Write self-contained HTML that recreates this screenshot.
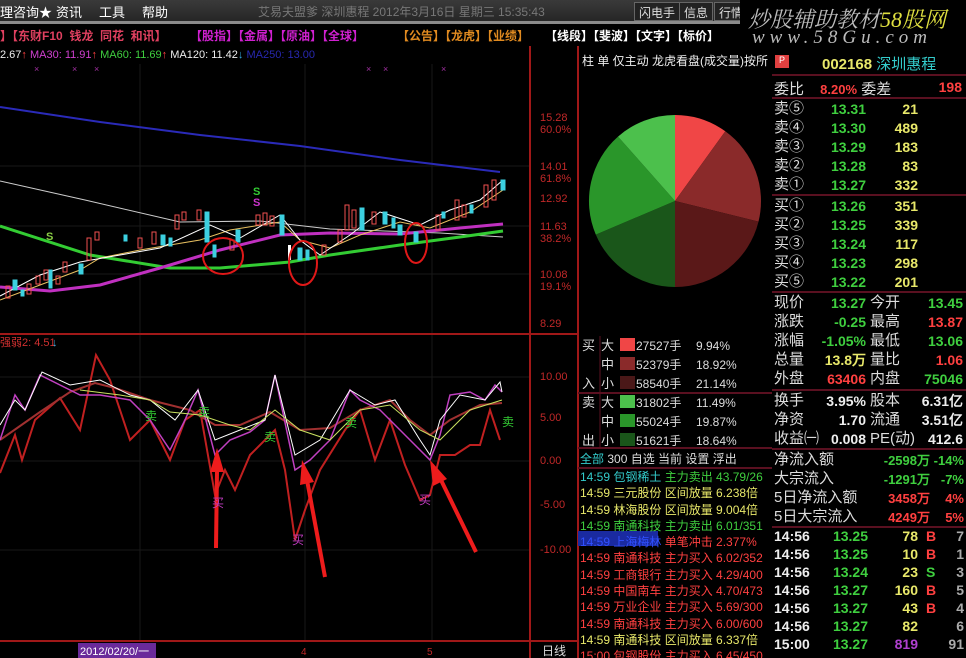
<!DOCTYPE html>
<html><head><meta charset="utf-8">
<style>
*{margin:0;padding:0;box-sizing:border-box}
html,body{width:966px;height:658px;overflow:hidden}
body{background:#000;position:relative;font-family:"Liberation Sans","Noto Sans CJK SC",sans-serif;color:#ddd}
.a{position:absolute;white-space:nowrap}
.menu{left:0;top:0;width:966px;height:21px;background:linear-gradient(#3a3a3a,#262626)}
.m{font-size:13px;color:#fff;top:2px}
.tb{top:27px;font-size:12px;font-weight:bold}
.btn{top:2px;height:19px;border:1px solid #666;font-size:12px;color:#ddd;padding:1px 4px;background:#222}
.r{font-size:15px;color:#ddd;left:774px}
.n{font-family:"Liberation Sans",sans-serif;font-weight:bold;font-size:14px;text-align:right}
.g{color:#3fcf3f}.y{color:#e8e86a}.rd{color:#ff4040}.w{color:#eee}
.sep{position:absolute;height:2px;background:#5a1020}
.nl{font-size:12px;left:580px;width:190px;height:189px;overflow:hidden;font-family:"Liberation Sans","Noto Sans CJK SC",sans-serif}
.ax{font-size:11px;color:#c02828;left:540px}
</style></head><body>
<div class="a menu"></div>
<div class="a m" style="left:0">理咨询★</div>
<div class="a m" style="left:56px">资讯</div>
<div class="a m" style="left:99px">工具</div>
<div class="a m" style="left:142px">帮助</div>
<div class="a" style="left:258px;top:3px;font-size:12px;color:#777">艾易夫盟爹 深圳惠程 2012年3月16日 星期三 15:35:43</div>
<div class="a btn" style="left:634px">闪电手</div>
<div class="a btn" style="left:679px">信息</div>
<div class="a btn" style="left:714px;width:30px">行情</div>
<div class="a" style="left:0;top:21px;width:740px;height:3px;background:#8a8a8a"></div>
<div class="a" style="left:0;top:24px;width:966px;height:22px;background:#000"></div>
<div class="a tb" style="left:0;color:#e04060">】【东财F10 &nbsp;钱龙 &nbsp;同花 &nbsp;和讯】</div>
<div class="a tb" style="left:190px;color:#d020d0">【股指】【金属】【原油】【全球】</div>
<div class="a tb" style="left:397px;color:#e08a20">【公告】【龙虎】【业绩】</div>
<div class="a tb" style="left:545px;color:#fff">【线段】【斐波】【文字】【标价】</div>
<div class="a" style="left:740px;top:0;width:226px;height:46px;background:#000"></div>
<div class="a" style="left:748px;top:3px;font-size:22px;font-style:italic;color:#bbb;font-family:'Liberation Serif','Noto Serif CJK SC',serif">炒股辅助教材<span style="color:#e0e040">58股网</span></div>
<div class="a" style="left:752px;top:27px;font-size:19px;font-style:italic;color:#bbb;letter-spacing:5px;font-family:'Liberation Serif',serif">www.58Gu.com</div>

<div class="a" style="left:0;top:49px;font-size:11px"><span class="w">2.67</span><span class="rd">↑</span> <span style="color:#d040d0">MA30: 11.91</span><span class="rd">↑</span> <span class="g">MA60: 11.69</span><span class="rd">↑</span> <span class="w">MA120: 11.42</span><span style="color:#3ad">↓</span> <span style="color:#2828b0">MA250: 13.00</span></div>

<svg class="a" style="left:0;top:0" width="580" height="658">
<g stroke="#181818" stroke-width="1">
<line x1="140" y1="64" x2="140" y2="640"/><line x1="305" y1="64" x2="305" y2="640"/><line x1="432" y1="64" x2="432" y2="640"/>
<line x1="0" y1="166" x2="530" y2="166"/><line x1="0" y1="226" x2="530" y2="226"/><line x1="0" y1="274" x2="530" y2="274"/>
<line x1="0" y1="377" x2="530" y2="377"/><line x1="0" y1="461" x2="530" y2="461"/><line x1="0" y1="550" x2="530" y2="550"/>
</g>
<line x1="530" y1="46" x2="530" y2="658" stroke="#a01818" stroke-width="2"/>
<line x1="578" y1="46" x2="578" y2="658" stroke="#a01818" stroke-width="2"/>
<line x1="0" y1="334" x2="578" y2="334" stroke="#a01818" stroke-width="2"/>
<line x1="0" y1="641" x2="578" y2="641" stroke="#a01818" stroke-width="2"/>
<polyline fill="none" stroke="#2a2ab8" stroke-width="2" points="0,107 100,122 200,135 300,146 400,160 500,172"/>
<polyline fill="none" stroke="#ccc" stroke-width="1" points="0,181 85,200 180,222 260,221 330,229 440,233 503,237"/>
<polyline fill="none" stroke="#3c3" stroke-width="3" points="0,226 90,255 170,268 220,268 290,262 330,255 400,245 460,237 503,231"/>
<polyline fill="none" stroke="#c030c0" stroke-width="3" points="0,287 50,291 100,285 160,268 220,250 280,235 330,233 400,234 460,228 503,224"/>
<polyline fill="none" stroke="#e8c060" stroke-width="1" points="0,300 40,285 80,270 100,258 140,250 200,240 230,230 280,222 300,240 330,248 360,235 400,222 430,228 470,212 503,190"/>
<polyline fill="none" stroke="#fff" stroke-width="1" points="0,296 40,275 80,262 120,255 160,248 210,225 240,238 280,215 300,240 320,255 350,235 380,212 420,225 450,210 480,200 503,180"/>
<g stroke-width="1">
<g fill="none" stroke="#f05050">
<rect x="6" y="286" width="4" height="12"/><rect x="27" y="284" width="4" height="10"/><rect x="36" y="276" width="4" height="8"/><rect x="44" y="270" width="4" height="10"/><rect x="56" y="276" width="4" height="8"/><rect x="63" y="262" width="4" height="10"/><rect x="87" y="238" width="4" height="22"/><rect x="95" y="232" width="4" height="8"/><rect x="138" y="238" width="4" height="10"/><rect x="152" y="232" width="4" height="12"/><rect x="175" y="215" width="4" height="14"/><rect x="182" y="212" width="4" height="8"/><rect x="197" y="210" width="4" height="10"/><rect x="230" y="240" width="4" height="10"/><rect x="256" y="215" width="4" height="10"/><rect x="263" y="213" width="4" height="12"/><rect x="270" y="216" width="4" height="10"/><rect x="322" y="245" width="4" height="10"/><rect x="338" y="230" width="4" height="12"/><rect x="345" y="205" width="4" height="25"/><rect x="352" y="210" width="4" height="18"/><rect x="372" y="212" width="4" height="12"/><rect x="436" y="215" width="4" height="15"/><rect x="455" y="200" width="4" height="20"/><rect x="462" y="205" width="4" height="12"/><rect x="484" y="185" width="4" height="22"/><rect x="492" y="180" width="4" height="20"/>
</g>
<g fill="#3cd0e0" stroke="#3cd0e0">
<rect x="13" y="280" width="4" height="10"/><rect x="21" y="290" width="3" height="6"/><rect x="49" y="270" width="3" height="18"/><rect x="79" y="264" width="4" height="10"/><rect x="124" y="235" width="3" height="6"/><rect x="161" y="235" width="4" height="10"/><rect x="169" y="238" width="3" height="8"/><rect x="205" y="212" width="4" height="30"/><rect x="213" y="245" width="3" height="12"/><rect x="236" y="230" width="4" height="12"/><rect x="280" y="215" width="4" height="20"/><rect x="298" y="248" width="4" height="12"/><rect x="306" y="250" width="3" height="10"/><rect x="360" y="208" width="4" height="22"/><rect x="383" y="212" width="4" height="12"/><rect x="392" y="218" width="3" height="10"/><rect x="398" y="225" width="4" height="10"/><rect x="414" y="232" width="4" height="10"/><rect x="442" y="212" width="3" height="6"/><rect x="470" y="205" width="3" height="8"/><rect x="501" y="180" width="4" height="10"/>
</g>
<rect x="288" y="245" width="3" height="15" fill="#fff"/>
</g>
<g fill="none" stroke="#e01818" stroke-width="2">
<ellipse cx="223" cy="256" rx="20" ry="18"/><ellipse cx="303" cy="263" rx="14" ry="22"/><ellipse cx="416" cy="243" rx="11" ry="20"/>
</g>
<g font-size="11" font-weight="bold" font-family="Liberation Sans"><text x="46" y="240" fill="#8c4">S</text><text x="253" y="195" fill="#3c3">S</text><text x="253" y="206" fill="#c3c">S</text></g>
<g fill="#a030a0" font-size="9"><text x="34" y="72">×</text><text x="72" y="72">×</text><text x="94" y="72">×</text><text x="366" y="72">×</text><text x="383" y="72">×</text><text x="441" y="72">×</text></g>
<text x="0" y="346" font-size="11" fill="#d03030">强弱2: 4.51</text><text x="52" y="346" font-size="11" fill="#3ad">↓</text>
<polyline fill="none" stroke="#c02020" stroke-width="2" points="0,473 15,435 22,460 35,420 60,398 80,430 96,355 110,380 130,440 150,420 170,460 185,420 200,410 215,495 225,470 235,490 250,455 275,430 285,470 295,540 305,510 320,470 345,430 360,410 375,460 390,420 405,465 420,500 430,495 440,455 455,455 470,445 480,445 490,410 500,440"/>
<polyline fill="none" stroke="#a03030" stroke-width="2" points="0,440 40,412 70,392 95,383 115,388 150,400 190,410 215,425 240,425 270,412 300,430 330,428 360,410 390,400 410,420 430,435 450,420 480,405 502,403"/>
<polyline fill="none" stroke="#c040c0" stroke-width="1.5" points="0,440 15,395 25,410 40,375 60,385 80,395 100,395 130,400 150,420 170,450 185,420 198,390 215,455 230,440 250,432 265,420 275,375 295,470 310,460 330,440 350,390 360,400 380,410 410,440 430,460 440,435 450,395 470,392 485,400 495,385 502,392"/>
<polyline fill="none" stroke="#fff" stroke-width="1" points="0,425 15,400 25,410 42,372 70,385 100,380 130,395 150,400 175,420 198,390 215,440 240,430 265,420 275,375 295,455 320,440 350,390 375,405 395,400 420,440 430,455 440,420 460,395 485,400 500,382 502,392"/>
<polyline fill="none" stroke="#c8e060" stroke-width="1" points="80,390 120,395 150,400 170,412 200,415 230,425 250,430 275,410 300,430 330,440 360,410 390,405 420,430 440,440 470,410 502,400"/>
<g stroke="#ee1c1c" stroke-width="4" fill="#ee1c1c"><line x1="216" y1="548" x2="217" y2="470"/><line x1="325" y1="577" x2="307" y2="480"/><line x1="476" y1="552" x2="440" y2="478"/></g>
<g fill="#ee1c1c"><polygon points="217,448 210,472 224,472"/><polygon points="302,460 300,485 314,482"/><polygon points="430,460 433,486 447,479"/></g>
<g font-size="12"><g fill="#3c3"><text x="145" y="420">卖</text><text x="198" y="416">卖</text><text x="264" y="441">卖</text><text x="345" y="427">卖</text><text x="502" y="426">卖</text></g>
<g fill="#c03cc0"><text x="212" y="507">买</text><text x="292" y="544">买</text><text x="419" y="504">买</text></g></g>
<rect x="78" y="643" width="78" height="15" fill="#6a2a9a"/>
<text x="80" y="655" font-size="11" fill="#fff">2012/02/20/一</text>
<text x="301" y="655" font-size="10" fill="#c02828">4</text><text x="427" y="655" font-size="10" fill="#c02828">5</text>
<text x="542" y="655" font-size="12" fill="#ddd">日线</text>
</svg>
<div class="a ax" style="top:112px">15.28<br>60.0%</div>
<div class="a ax" style="top:161px">14.01<br>61.8%</div>
<div class="a ax" style="top:193px">12.92</div>
<div class="a ax" style="top:221px">11.63<br>38.2%</div>
<div class="a ax" style="top:269px">10.08<br>19.1%</div>
<div class="a ax" style="top:318px">8.29</div>
<div class="a ax" style="top:371px">10.00</div>
<div class="a ax" style="top:412px">5.00</div>
<div class="a ax" style="top:455px">0.00</div>
<div class="a ax" style="top:499px">-5.00</div>
<div class="a ax" style="top:544px">-10.00</div>

<div class="a" style="left:582px;top:52px;font-size:12px;color:#eee">柱 单 仅主动 龙虎看盘(成交量)按所</div>
<svg class="a" style="left:578px;top:0" width="194" height="658">
<g transform="translate(-578,0)">
<path d="M675,201 L675,115 A86,86 0 0 1 725.3,131.3Z" fill="#f04646"/>
<path d="M675,201 L725.3,131.3 A86,86 0 0 1 758.5,221.6Z" fill="#8a2a2a"/>
<path d="M675,201 L758.5,221.6 A86,86 0 0 1 675,287Z" fill="#5a1818"/>
<path d="M675,201 L675,287 A86,86 0 0 1 595.8,234.6Z" fill="#1a561a"/>
<path d="M675,201 L595.8,234.6 A86,86 0 0 1 618,136.6Z" fill="#2a962a"/>
<path d="M675,201 L618,136.6 A86,86 0 0 1 675,115Z" fill="#4cc04c"/>
</g>
<line x1="0" y1="393" x2="194" y2="393" stroke="#5a1020" stroke-width="2"/>
<line x1="0" y1="448" x2="194" y2="448" stroke="#5a1020" stroke-width="2"/>
<line x1="22" y1="336" x2="22" y2="448" stroke="#5a1020"/>
<rect x="42" y="338" width="15" height="13" fill="#f04646"/><rect x="42" y="357" width="15" height="13" fill="#8a2a2a"/><rect x="42" y="376" width="15" height="13" fill="#4a1818"/>
<rect x="42" y="395" width="15" height="13" fill="#4cc04c"/><rect x="42" y="414" width="15" height="13" fill="#2a962a"/><rect x="42" y="433" width="15" height="13" fill="#1a561a"/>
<rect x="0" y="467" width="194" height="2" fill="#5a1020"/>
<rect x="0" y="531" width="80" height="15" fill="#1a2aa0"/>
</svg>
<div class="a" style="left:582px;top:336px;font-size:13px;line-height:19px;color:#ddd">买<br>&nbsp;<br>入<br>卖<br>&nbsp;<br>出</div>
<div class="a" style="left:601px;top:336px;font-size:13px;line-height:19px;color:#ddd">大<br>中<br>小<br>大<br>中<br>小</div>
<div class="a" style="left:636px;top:337px;font-size:12px;line-height:19px;color:#ddd">27527手<br>52379手<br>58540手<br>31802手<br>55024手<br>51621手</div>
<div class="a" style="left:696px;top:337px;font-size:12px;line-height:19px;color:#ddd">9.94%<br>18.92%<br>21.14%<br>11.49%<br>19.87%<br>18.64%</div>
<div class="a" style="left:580px;top:450px;font-size:12px;color:#ddd"><span style="color:#3cc">全部</span> 300 自选 当前 设置 浮出</div>
<div class="a nl" style="top:469px;line-height:16.3px">
<span style="color:#3cc">14:59 包钢稀土 </span><span class="g">主力卖出 43.79/26</span><br>
<span class="y">14:59 三元股份 区间放量 6.238倍</span><br>
<span class="y">14:59 林海股份 区间放量 9.004倍</span><br>
<span class="g">14:59 南通科技 主力卖出 6.01/351</span><br>
<span style="color:#3050ff">14:59 上海梅林 </span><span class="rd">单笔冲击 2.377%</span><br>
<span class="rd">14:59 南通科技 主力买入 6.02/352</span><br>
<span class="rd">14:59 工商银行 主力买入 4.29/400</span><br>
<span class="rd">14:59 中国南车 主力买入 4.70/473</span><br>
<span class="rd">14:59 万业企业 主力买入 5.69/300</span><br>
<span class="rd">14:59 南通科技 主力买入 6.00/600</span><br>
<span class="y">14:59 南通科技 区间放量 6.337倍</span><br>
<span class="rd">15:00 包钢股份 主力买入 6.45/450</span><br>
<span class="g">15:00 工大高新 主力卖出 4.00/357</span></div>

<div class="a" style="left:775px;top:55px;width:14px;height:13px;background:#e04040;font-size:9px;color:#fff;text-align:center">P</div>
<div class="a" style="left:822px;top:53px;font-size:15px;font-weight:bold;color:#e8e86a">002168 <span style="color:#3cc;font-weight:normal">深圳惠程</span></div>
<div class="sep" style="left:772px;top:74px;width:194px"></div>
<div class="a r" style="top:78px">委比 <span class="n rd" style="font-size:13px;margin-left:12px">8.20%</span> 委差</div>
<div class="a n rd" style="left:900px;top:79px;width:62px">198</div>
<div class="sep" style="left:772px;top:97px;width:194px"></div>
<div class="a r" style="top:99px;line-height:19px">卖⑤<br>卖④<br>卖③<br>卖②<br>卖①</div>
<div class="a n g" style="left:820px;top:100px;width:46px;line-height:19px">13.31<br>13.30<br>13.29<br>13.28<br>13.27</div>
<div class="a n y" style="left:870px;top:100px;width:48px;line-height:19px">21<br>489<br>183<br>83<br>332</div>
<div class="sep" style="left:772px;top:194px;width:194px"></div>
<div class="a r" style="top:196px;line-height:19px">买①<br>买②<br>买③<br>买④<br>买⑤</div>
<div class="a n g" style="left:820px;top:197px;width:46px;line-height:19px">13.26<br>13.25<br>13.24<br>13.23<br>13.22</div>
<div class="a n y" style="left:870px;top:197px;width:48px;line-height:19px">351<br>339<br>117<br>298<br>201</div>
<div class="sep" style="left:772px;top:291px;width:194px"></div>
<div class="a r" style="top:293px;line-height:19px">现价<br>涨跌<br>涨幅<br>总量<br>外盘</div>
<div class="a n" style="left:810px;top:294px;width:56px;line-height:19px"><span class="g">13.27</span><br><span class="g">-0.25</span><br><span class="g">-1.05%</span><br><span class="y">13.8万</span><br><span class="rd">63406</span></div>
<div class="a r" style="left:870px;top:293px;line-height:19px">今开<br>最高<br>最低<br>量比<br>内盘</div>
<div class="a n" style="left:905px;top:294px;width:58px;line-height:19px"><span class="g">13.45</span><br><span class="rd">13.87</span><br><span class="g">13.06</span><br><span class="rd">1.06</span><br><span class="g">75046</span></div>
<div class="sep" style="left:772px;top:389px;width:194px"></div>
<div class="a r" style="top:391px;line-height:19px">换手<br>净资<br>收益㈠</div>
<div class="a n w" style="left:810px;top:392px;width:56px;line-height:19px">3.95%<br>1.70<br>0.008</div>
<div class="a r" style="left:870px;top:391px;line-height:19px">股本<br>流通<br>PE(动)</div>
<div class="a n w" style="left:905px;top:392px;width:58px;line-height:19px">6.31亿<br>3.51亿<br>412.6</div>
<div class="sep" style="left:772px;top:448px;width:194px"></div>
<div class="a r" style="top:450px;line-height:19px">净流入额<br>大宗流入<br>5日净流入额<br>5日大宗流入</div>
<div class="a n" style="left:880px;top:451px;width:50px;line-height:19px;font-size:13px"><span class="g">-2598万</span><br><span class="g">-1291万</span><br><span class="rd">3458万</span><br><span class="rd">4249万</span></div>
<div class="a n" style="left:930px;top:451px;width:34px;line-height:19px;font-size:13px"><span class="g">-14%</span><br><span class="g">-7%</span><br><span class="rd">4%</span><br><span class="rd">5%</span></div>
<div class="sep" style="left:772px;top:526px;width:194px"></div>
<div class="a n w" style="left:774px;top:527px;text-align:left;line-height:18px">14:56<br>14:56<br>14:56<br>14:56<br>14:56<br>14:56<br>15:00</div>
<div class="a n g" style="left:820px;top:527px;width:48px;line-height:18px">13.25<br>13.25<br>13.24<br>13.27<br>13.27<br>13.27<br>13.27</div>
<div class="a n y" style="left:880px;top:527px;width:38px;line-height:18px">78<br>10<br>23<br>160<br>43<br>82<br><span style="color:#b040d0">819</span></div>
<div class="a n" style="left:926px;top:527px;text-align:left;line-height:18px"><span class="rd">B</span><br><span class="rd">B</span><br><span class="g">S</span><br><span class="rd">B</span><br><span class="rd">B</span><br>&nbsp;<br>&nbsp;</div>
<div class="a n" style="left:940px;top:527px;width:24px;line-height:18px;color:#aaa">7<br>1<br>3<br>5<br>4<br>6<br>91</div>
</body></html>
